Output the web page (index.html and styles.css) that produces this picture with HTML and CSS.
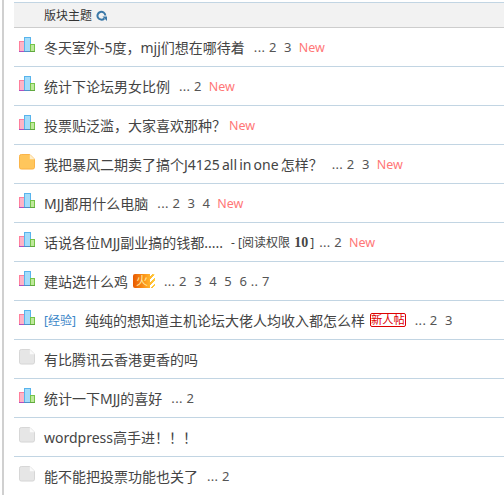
FILE: index.html
```html
<!DOCTYPE html>
<html lang="en">
<head>
    <meta charset="UTF-8">
    <title>版块主题</title>
    <link rel="stylesheet" href="styles.css">
</head>
<body>
    <svg class="icon-defs" width="0" height="0">
        <defs>
            <symbol id="poll" viewBox="0 0 16 16">
                <rect x="0.5" y="4.500" width="5" height="10" fill="#ffb4c6" stroke="#ff7f9c"/>
                <rect x="5.500" y="0.500" width="6" height="14" fill="#a4dcfa" stroke="#58b4ec"/>
                <rect x="11.500" y="7.500" width="4" height="7" fill="#bfe89c" stroke="#74c448"/>
                <rect x="0" y="14" width="5" height="1" fill="#b04fc0"/>
                <rect x="5" y="14" width="6" height="1" fill="#4f90c8"/>
                <rect x="11" y="14" width="5" height="1" fill="#60a840"/>
            </symbol>
            <symbol id="hot" viewBox="0 0 17 17">
                <path d="M2.500 0.500H11.500L16.500 5.500V14a2 2 0 0 1-2 2H2.500a2 2 0 0 1-2-2V2.500a2 2 0 0 1 2-2z" fill="#ffc65c" stroke="#fbb040"/>
                <path d="M11.500 0.500V5.500H16.500z" fill="#ffeec8"/>
            </symbol>
            <symbol id="plain" viewBox="0 0 17 17">
                <path d="M2.500 0.500H11.500L16.500 5.500V14a2 2 0 0 1-2 2H2.500a2 2 0 0 1-2-2V2.500a2 2 0 0 1 2-2z" fill="#e6e6e6" stroke="#d4d4d4"/>
                <path d="M11.500 0.500V5.500H16.500z" fill="#fafafa"/>
            </symbol>
        </defs>
    </svg>

    <div class="thread-list">
        <div class="list-head">
            <span>版块主题</span>
            <svg class="refresh" viewBox="0 0 12 12" width="11" height="11">
                <path d="M9 9.200A4.300 4.300 0 1 1 10.200 6" fill="none" stroke="#3a78a8" stroke-width="2.200"/>
                <path d="M7 7H12V12z" fill="#3a78a8"/>
            </svg>
        </div>

        <div class="row">
            <svg class="row-icon"><use href="#poll"/></svg>
            <a class="title">冬天室外-5度，mjj们想在哪待着</a>
            <span class="pages">... 2 &nbsp;3</span>
            <span class="new">New</span>
        </div>
        <div class="row">
            <svg class="row-icon"><use href="#poll"/></svg>
            <a class="title">统计下论坛男女比例</a>
            <span class="pages">... 2</span>
            <span class="new">New</span>
        </div>
        <div class="row">
            <svg class="row-icon"><use href="#poll"/></svg>
            <a class="title">投票贴泛滥，大家喜欢那种？</a>
            <span class="new">New</span>
        </div>
        <div class="row">
            <svg class="row-icon"><use href="#hot"/></svg>
            <a class="title">我把暴风二期卖了搞个J4125 all in one 怎样？</a>
            <span class="pages">... 2 &nbsp;3</span>
            <span class="new">New</span>
        </div>
        <div class="row">
            <svg class="row-icon"><use href="#poll"/></svg>
            <a class="title">MJJ都用什么电脑</a>
            <span class="pages">... 2 &nbsp;3 &nbsp;4</span>
            <span class="new">New</span>
        </div>
        <div class="row">
            <svg class="row-icon"><use href="#poll"/></svg>
            <a class="title">话说各位MJJ副业搞的钱都.....</a>
            <span class="perm">- [阅读权限 <b>10</b>]</span>
            <span class="pages">... 2</span>
            <span class="new">New</span>
        </div>
        <div class="row">
            <svg class="row-icon"><use href="#poll"/></svg>
            <a class="title">建站选什么鸡</a>
            <span class="fire">火<i class="fire-tail"></i></span>
            <span class="pages">... 2 &nbsp;3 &nbsp;4 &nbsp;5 &nbsp;6 .. 7</span>
        </div>
        <div class="row">
            <svg class="row-icon"><use href="#poll"/></svg>
            <a class="tag">[经验]</a>
            <a class="title">纯纯的想知道主机论坛大佬人均收入都怎么样</a>
            <span class="newbie">新人帖</span>
            <span class="pages">... 2 &nbsp;3</span>
        </div>
        <div class="row">
            <svg class="row-icon"><use href="#plain"/></svg>
            <a class="title">有比腾讯云香港更香的吗</a>
        </div>
        <div class="row">
            <svg class="row-icon"><use href="#poll"/></svg>
            <a class="title">统计一下MJJ的喜好</a>
            <span class="pages">... 2</span>
        </div>
        <div class="row">
            <svg class="row-icon"><use href="#plain"/></svg>
            <a class="title">wordpress高手进！！！</a>
        </div>
        <div class="row">
            <svg class="row-icon"><use href="#plain"/></svg>
            <a class="title">能不能把投票功能也关了</a>
            <span class="pages">... 2</span>
        </div>
    </div>
</body>
</html>
```

FILE: styles.css
```css
html, body {
    margin: 0;
    padding: 0;
    height: 495px;
    overflow: hidden;
    background-color: white;
}
body {
    font-family: "Noto Sans", "Noto Sans CJK SC", sans-serif;
    font-size: 14px;
    color: #444;
    border-left: 2px solid #d0d0d0;
    margin-left: 2px;
    padding-left: 10px;
    padding-top: 2px;
}
.icon-defs {
    position: absolute;
}
.thread-list {
    border-top: 1px solid #c2d5e3;
}
.list-head {
    height: 24px;
    background-color: #f2f2f2;
    border-bottom: 1px solid #cdcdcd;
    padding-left: 30px;
    display: flex;
    align-items: center;
    gap: 4px;
    font-size: 12px;
    color: #333;
}
.row {
    height: 38px;
    border-bottom: 1px solid #c2d5e3;
    display: flex;
    align-items: center;
    padding-left: 5px;
    white-space: nowrap;
}
.row-icon {
    width: 16px;
    height: 16px;
    margin-right: 9px;
    margin-top: -4px;
    flex: none;
}
.title {
    color: #444;
    word-spacing: -1.500px;
}
.tag {
    color: #3a86c8;
    font-size: 12px;
    margin-right: 9px;
}
.pages {
    font-size: 13px;
    letter-spacing: 0.300px;
    color: #555;
    margin-left: 9px;
}
.new {
    font-size: 12.500px;
    color: #f77;
    margin-left: 3px;
}
.pages + .new {
    margin-left: 7px;
}
.perm {
    font-size: 12px;
    color: #444;
    margin-left: 8px;
}
.perm b {
    font-family: "Liberation Serif", serif;
    font-size: 14px;
    margin: 0 2px 0 1px;
}
.perm + .pages {
    margin-left: 5px;
}
.fire {
    margin-left: 5px;
    height: 14px;
    width: 22px;
    font-size: 12px;
    line-height: 14px;
    color: #ffe9a0;
    background: linear-gradient(90deg, #e85a00, #ffa020 60%, #ffd040);
    border-radius: 2px;
    padding-left: 3px;
    box-sizing: border-box;
    position: relative;
}
.fire-tail {
    position: absolute;
    right: 0;
    top: 0;
    bottom: 0;
    width: 5px;
    background: repeating-linear-gradient(135deg, white 0 2px, transparent 2px 4px);
}
.newbie {
    font-size: 11.300px;
    line-height: 12px;
    color: #d00;
    border: 1px solid #d00;
    border-radius: 2px;
    margin-left: 5px;
}
```
